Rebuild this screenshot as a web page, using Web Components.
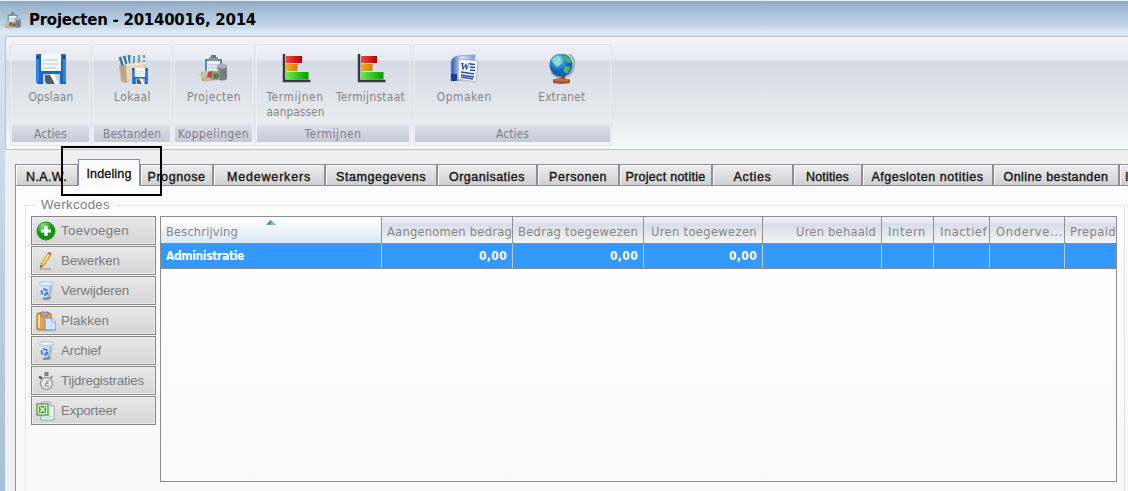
<!DOCTYPE html>
<html lang="nl"><head><meta charset="utf-8"><title>Projecten - 20140016, 2014</title>
<style>html,body{margin:0;height:100%;overflow:hidden;font-family:"DejaVu Sans Condensed","DejaVu Sans",sans-serif}</style></head>
<body><project-window></project-window>
<script>
const define=(name,html,init)=>customElements.define(name,class extends HTMLElement{
  connectedCallback(){ if(this.shadowRoot)return; const t=document.createElement('template');
    t.innerHTML=html; this.attachShadow({mode:'open'}).append(t.content.cloneNode(true)); if(init)init(this,this.shadowRoot); }
});

const disk=(x,y,s)=>`<g transform="translate(${x} ${y}) scale(${s})"><path d="M0 1.500Q0 0 1.500 0H28.500Q30 0 30 1.500V30H2L0 28z" fill="#1b66c4"/><path d="M0 3h3v25H0zM27 3h3v25h-3z" fill="#3583dc"/><path d="M5 0h20v17H5z" fill="#f4f8f8"/><path d="M7 6h15M7 10h16M7 14h13" stroke="#b4c6d4"/><path d="M7 20h17v10H7z" fill="#c9ced2"/><path d="M9 21h5l5 9H11l-2-3z" fill="#555d68"/><path d="M14 20h4l5 10h-4z" fill="#fff"/><path d="M1 2h2v3H1zM27 2h2v3h-2z" fill="#0b3d91"/></g>`;
const clip=`<path d="M6 5h17v18H6z" fill="#5489b4"/><path d="M8 7h13v16H8z" fill="#edf3f6"/><path d="M10 3h9v4h-9z" fill="#8d9499"/><path d="M12 1h5v3h-5z" fill="#70777b"/><path d="M9 11h11M9 14h10M9 17h8" stroke="#aab7c0"/><path d="M18 12v13q5 3 10 0V12z" fill="#777d82"/><ellipse cx="23" cy="12" rx="5" ry="2.500" fill="#aaaeb1"/><path d="M19 15v9" stroke="#b9bcbf" stroke-width="2"/><path d="M2 18l18-1 1 9-18 1z" fill="#98a783"/><path d="M0 21l7-5 3 4-6 5z" fill="#c6c4a0"/><path d="M9 18l5-1-2 8H8z" fill="#b54c4c"/><circle cx="17" cy="22" r="3" fill="#577c55"/><path d="M4 25l6-2 3 3-6 2z" fill="#d5b68f"/>`;
const chart=`<defs><linearGradient id="r"><stop stop-color="#f34a4a"/><stop offset="1" stop-color="#b80000"/></linearGradient><linearGradient id="o"><stop stop-color="#edb02c"/><stop offset="1" stop-color="#ca8100"/></linearGradient><linearGradient id="g"><stop stop-color="#68ee45"/><stop offset="1" stop-color="#079b07"/></linearGradient></defs><path d="M5 2h16v7H5z" fill="url(#r)"/><path d="M5 10h11.500v7H5z" fill="url(#o)"/><path d="M5 18h22.500v7.500H5z" fill="url(#g)"/><path d="M3 0v27h26.500" fill="none" stroke="#3c3840" stroke-width="2.500"/>`;
const bin=`<path d="M2 2l14-1-2.500 14q-4.500 3-8 1z" fill="#cfdde9"/><path d="M12 4h3l-2 11-3 1z" fill="#b4c0cb"/><ellipse cx="9" cy="2" rx="7.500" ry="1.800" fill="#eaf3f9" stroke="#a6bccf" stroke-width=".8"/><path d="M4 5l1.500 9" stroke="#f5faff"/><circle cx="7" cy="10" r="2.700" fill="none" stroke="#3b74d4" stroke-width="1.700" stroke-dasharray="4.500 1.100"/><path d="M7 10l4 3" stroke="#5c8fde"/><path d="M5 16q5-2.500 9-1l-2 2q-4 1-6 .5z" fill="#878d93"/>`;
const pics={
save:['0 0 30 30',disk(0,0,1)],
local:['0 0 30 30',`<path d="M3 28L1 11l9-1 5-2 13 1v8L8 29z" fill="#c9af91"/><path d="M2 3l3 9M6 2l3 9M11 1l1 10" stroke="#3f7d9d" stroke-width="3" fill="none"/><path d="M16 2v9M21 1v9M26 1v3M26 6v3" stroke="#6ca4bd" stroke-width="2.500"/><path d="M4 3l3 9M8.500 2l2 9M13 3v8M18 1v8" stroke="#e4f2f6" stroke-width="1.300"/><path d="M4 14l9-3 5-2 10 2-7 13-15 4z" fill="#ead6bc"/><path d="M2 12l6-1 1 18-5-3z" fill="#bba58a"/><path d="M8 11l20-2" stroke="#f8e8d0" stroke-width="2"/>`+disk(14,14,.53)],
project:['0 0 30 30',clip], projectSmall:['0 1 28.500 27',clip], chart:['0 0 30 30',chart],
word:['0 0 30 30',`<defs><linearGradient id="w"><stop stop-color="#2453ab"/><stop offset=".45" stop-color="#dce8fa"/><stop offset="1" stop-color="#7494d3"/></linearGradient></defs><path d="M2 8Q3 2 10 2l16-1-2 24-22 2z" fill="url(#w)" stroke="#91a7d2"/><path d="M2 20h6v7H2z" fill="#133e93"/><path d="M10 5l19 2-2 21-18-3z" fill="#fbfcfe" stroke="#adb7c8"/><text x="11" y="16" font-family="Liberation Serif" font-size="11" font-weight="bold" font-style="italic" fill="#173e91">W</text><path d="M21 10l5 .4M21 13l5 .5M21 16l5 .5M12 18l13 2M12 21l13 2M12 23l12 2" stroke="#234d9d" stroke-width="1.500"/>`],
globe:['0 0 30 30',`<defs><radialGradient id="b" cx=".38" cy=".28"><stop stop-color="#c3effc"/><stop offset=".5" stop-color="#369bdc"/><stop offset="1" stop-color="#1261ad"/></radialGradient></defs><path d="M22 0c8 5 7 20-5 23q-9 1-13-5" fill="none" stroke="#a4aab2" stroke-width="2"/><path d="M14 22h4v4h-4z" fill="#8e4c31"/><path d="M6 25.500q8-3 17 0v3.500q-8 2-17 0z" fill="#a85431"/><path d="M8 26h13" stroke="#d89066"/><circle cx="14" cy="11" r="11.500" fill="url(#b)"/><path d="M5 6q4-5 8-4l-2 4 4 2-4 5-4-3z" fill="#8bdcc0"/><path d="M17 1q6 2 8 7l-4 1-4-4zM18 12l6 1-4 7-4-3z" fill="#43b866"/>`],
add:['0 0 20 20',`<defs><radialGradient id="p" cx=".35" cy=".2"><stop stop-color="#91df7c"/><stop offset="1" stop-color="#129411"/></radialGradient></defs><circle cx="10" cy="10" r="9" fill="url(#p)" stroke="#278b23"/><path d="M10 5v10M5 10h10" stroke="#fff" stroke-width="3.200"/>`],
edit:['0 0 20 20',`<path d="M4 18h11" stroke="#aaa" stroke-width="1.500"/><path d="M4 17l1.500-5 6-9.500 3 2-6 9.500z" fill="#efc344" stroke="#b38c35" stroke-width=".7"/><path d="M11.500 2.500l1-1.500 3 1-1 2.500z" fill="#bd5862"/><path d="M4 17l1-3 2 1z" fill="#555"/><path d="M7 12l6-9" stroke="#fff0a0"/>`],
bin:['-1 0 19 18',bin],
paste:['0 0 20 20',`<rect x="1" y="2" width="14" height="17" rx="1.500" fill="#e6a34b" stroke="#a9651c"/><path d="M3 4v13" stroke="#ffda91" stroke-width="2"/><path d="M5 1h7v4H5z" fill="#b3b1a9" stroke="#766d5f" stroke-width=".7"/><path d="M9 7h7l4 4v8H9z" fill="#d1e6fc" stroke="#658fcb"/><path d="M16 7v4h4" fill="#fff" stroke="#658fcb" stroke-width=".7"/>`],
time:['0 0 20 20',`<circle cx="10.500" cy="12.500" r="6" fill="#ebe8e8" stroke="#aaa0a0" stroke-width="1.700"/><path d="M8.500 1h4v4h-4z" fill="#808080"/><path d="M14.500 7l2-2" stroke="#999" stroke-width="2"/><path d="M3 6l3 1" stroke="#444" stroke-width="2"/><path d="M13 10h-2l-2 5h4M10 12.500h2.500" fill="none" stroke="#888"/>`],
excel:['0 0 20 20',`<path d="M5 1h9l4 4v14H5z" fill="#f2f7f8" stroke="#91a8aa"/><path d="M14 1v4h4" fill="#d4e1e4" stroke="#91a8aa"/><path d="M1 3h11v11H1z" fill="#e6f6da" stroke="#5dac43" stroke-width="1.500"/><path d="M3 5h7v7H3z" fill="#45a130"/><path d="M4 6l5 5M9 6l-5 5" stroke="#fff" stroke-width="1.400"/><path d="M7 16h9M14 8v8" stroke="#b4cbbb"/>`]};

define('ui-icon','<style>:host{display:block;flex:none}svg{display:block;width:100%;height:100%}</style>',(h,s)=>{
  const [box,art]=pics[h.getAttribute('name')]; const d=document.createElement('div');
  d.style.cssText='width:100%;height:100%'; d.innerHTML=`<svg viewBox="${box}">${art}</svg>`; s.append(d);});

/* Text label whose tracking is adjusted to reach the width given in "w". */
define('fit-text','<style>:host{display:inline-block;white-space:pre;flex:none}span{display:inline-block}</style><span></span>',(h,s)=>{
  const e=s.querySelector('span'),t=h.getAttribute('t'),w=+h.getAttribute('w'); e.textContent=t;
  h.style.width=w+'px'; e.style.letterSpacing=((w-e.getBoundingClientRect().width)/t.length)+'px';});

const T=(t,w)=>`<fit-text t="${t}" w="${w}"></fit-text>`;

define('ribbon-item',`<style>:host{display:flex;flex-direction:column;align-items:center;font-size:11.800px;line-height:15px;color:#858585}</style><slot></slot>`);
define('ribbon-group',`<style>:host{display:flex;flex-direction:column;box-sizing:border-box;height:102px;border:1px solid #e3e5e9;box-shadow:inset 0 0 0 1px #f4f5f866;padding:9px 1px 3px}
.items{flex:1;display:flex;min-height:0}.cap{height:17px;background:linear-gradient(#dcdfeb,#c5c8d6);font-size:11.800px;line-height:18px;color:#808080;text-align:center}</style><div class="items"><slot></slot></div><div class="cap"><slot name="caption"></slot></div>`);

const item=(icon,w,ml,lines)=>`<ribbon-item style="width:${w}px;margin-left:${ml}px"><ui-icon style="width:30px;height:30px;margin-bottom:6px" name="${icon}"></ui-icon><div>${lines.map(l=>`<div style="height:15px">${T(...l)}</div>`).join('')}</div></ribbon-item>`;
const group=(w,ml,cap,items)=>`<ribbon-group style="width:${w}px;margin-left:${ml}px">${items}<span slot="caption">${T(...cap)}</span></ribbon-group>`;
define('ribbon-bar',`<style>:host{display:flex;box-sizing:border-box;height:114px;padding:7px 0 0 4px;border:1px solid #bfc1c5;border-right:0;background:linear-gradient(#f3f4f8 0,#e8eaf2 23px,#d6dae5 24px,#dde1e9 50px,#e9ecee 85px,#f6fafa 112px)}</style>`
+group(81,0,['Acties',33],item('save',77,1,[['Opslaan',45]]))
+group(80,1,['Bestanden',58],item('local',76,1,[['Lokaal',37]]))
+group(81,1,['Koppelingen',71],item('project',77,1,[['Projecten',54]]))
+group(156,1,['Termijnen',57],item('chart',77,0,[['Termijnen',57],['aanpassen',58]])+item('chart',75,-1,[['Termijnstaat',69]]))
+group(199,2,['Acties',33],item('word',97,1,[['Opmaken',55]])+item('globe',97,1,[['Extranet',47]])));

define('tab-item',`<style>:host{display:flex;box-sizing:border-box;height:22px;align-items:center;justify-content:center;overflow:hidden;border:1px solid #8c8d98;box-shadow:inset 1px 1px #fafafa;background:linear-gradient(#eeeeef,#d0d0d1);font:12.500px "Liberation Sans",sans-serif;-webkit-text-stroke:.35px #111;color:#111;padding-top:3px}
:host([active]){height:27px;border-bottom:0;background:#fcfcfc;padding:1px 0 0}:host([last]){justify-content:flex-start;padding-left:5px}</style><slot></slot>`);
const tabs=[['N.A.W.',41,63],['Indeling',45,62],['Prognose',58,73],['Medewerkers',84,112],['Stamgegevens',90,112],['Organisaties',76,100],['Personen',58,82],['Project notitie',80,93],['Acties',38,81],['Notities',43,69],['Afgesloten notities',112,131],['Online bestanden',105,126],['I',3,50]];
define('tab-strip',`<style>:host{display:flex;align-items:flex-end;height:36px;box-sizing:border-box;overflow:hidden}</style>`+tabs.map(([t,w,b],i)=>`<tab-item ${i==1?'active':i==12?'last':''} style="width:${b}px;flex:none">${T(t,w)}</tab-item>`).join(''));

define('side-button',`<style>:host{display:flex;align-items:center;box-sizing:border-box;height:29px;border:1px solid #858585;box-shadow:inset 0 0 0 1px #ececec;background:linear-gradient(#e8e8e8,#d5d5d5);padding-left:4px;gap:5px;font:13.300px "Liberation Sans",sans-serif;color:#7b7b7b}</style><slot name="icon"></slot><slot></slot>`);
const btns=[['add','Toevoegen',68],['edit','Bewerken',59],['bin','Verwijderen',68],['paste','Plakken',48],['bin','Archief',40],['time','Tijdregistraties',83],['excel','Exporteer',56]];

const cols=[['Beschrijving',72,221,'l'],['Aangenomen bedrag',125,131,'r0'],['Bedrag toegewezen',120,131,'r'],['Uren toegewezen',106,119,'r'],['Uren behaald',80,119,'r'],['Intern',38,52,'l'],['Inactief',47,56,'l'],['Onderve...',67,75,'l'],['Prepaid',46,51,'l']];
define('work-grid',`<style>:host{display:flex;flex-direction:column;box-sizing:border-box;height:266px;width:957px;border:1px solid #8d8d8d;background:linear-gradient(#fff,#fafafa);font-size:12.800px;overflow:hidden}
.row{display:flex;height:24px;background:#3399ff;color:#fff;font:bold 12px "DejaVu Sans Condensed","DejaVu Sans";border-bottom:1px solid #8b8b8b;border-top:1px solid #8b8b8b}.head{display:flex;height:26px;color:#868686;background:linear-gradient(#eef0f4 0,#e8eaf0 5px,#d9dde7 7px,#e6e8ec 17px,#f5f5f6)}
.c{box-sizing:border-box;flex:none;display:flex;align-items:center;border-right:1px solid #929292;padding:2px 5px 0 6px;overflow:hidden}.c:first-child{padding-left:5px}.row .c{border-color:#b4cfeb;padding-top:0}.r,.r0{justify-content:flex-end}.c.r0{padding-right:0}.row .r0{padding-right:5px}.c:last-child{border:0;padding-right:0;padding-left:5px}
.l:nth-child(n+6){padding-right:0}
.head .c:first-child{background:linear-gradient(#fff,#f1f7fc 40%,#d8e7f5);position:relative}.sort{position:absolute;left:105px;top:3px;width:10px;height:5px}</style>
<div class="head">${cols.map(([t,w,b,a],i)=>`<div class="c ${a}" style="width:${b}px">${T(t,w)}${i?'':'<svg class="sort" viewBox="0 0 10 5"><path d="M0 5L5 0l5 5z" fill="#75b1cf"/><path d="M0 5L5 0v3z" fill="#397c9e"/></svg>'}</div>`).join('')}</div>
<div class="row">${cols.map(([t,w,b,a],i)=>`<div class="c ${a}" style="width:${b}px">${i==0?T('Administratie',78):i<4?T('0,00',28):''}</div>`).join('')}</div>`);

define('field-set',`<style>:host{display:grid;box-sizing:border-box;grid-template-rows:10px 1fr;width:1100px;height:300px;border:1px solid #e4e4e4;border-bottom:0}.l{justify-self:start;margin:-9px 0 0 10px;padding:0 5px;background:#fcfcfc;font:13.300px/16px "Liberation Sans",sans-serif;color:#808080;height:16px}.b{display:flex;gap:4px;padding-left:5px}.s{display:flex;flex-direction:column;gap:1px;width:125px}</style>
<div class="l">${T('Werkcodes',69)}</div><div class="b"><div class="s">${btns.map(([i,t,w])=>`<side-button><ui-icon slot="icon" style="width:20px;height:20px" name="${i}"></ui-icon>${T(t,w)}</side-button>`).join('')}</div><work-grid></work-grid></div>`);

define('title-bar',`<style>:host{display:flex;align-items:center;box-sizing:border-box;height:36px;padding:3px 0 0 4px;gap:8px;border-top:1px solid #e6eff7;background:linear-gradient(#91abc5,#a9c1d8 12px,#c3d6e8 25px,#dce8f4 30px,#dae7f3);font:bold 15px "DejaVu Sans","DejaVu Sans Condensed";color:#000}ui-icon{width:17px;height:17px}</style><ui-icon name="projectSmall"></ui-icon>${T('Projecten - 20140016, 2014',227)}`);

define('project-window',`<style>:host{display:block;position:relative;width:1128px;height:491px;overflow:hidden;background:linear-gradient(#dae7f3,#ccdcec 150px,#b8cbe0 310px,#a8bfdb)}
.main{margin-left:5px;height:455px;background:#efefef}.in{margin-left:10px}.page{box-sizing:border-box;height:305px;border-left:1px solid #8c8d98;background:linear-gradient(#fdfdfd,#f9f9f9);padding:19px 0 0 9px;border-top:0}.mark{position:absolute;left:61px;top:146px;width:97px;height:46px;border:2px solid #000}</style>
<title-bar></title-bar><div class="main"><ribbon-bar></ribbon-bar><div class="in"><tab-strip></tab-strip><div class="page"><field-set></field-set></div></div></div><div class="mark"></div>`);
</script></body></html>
